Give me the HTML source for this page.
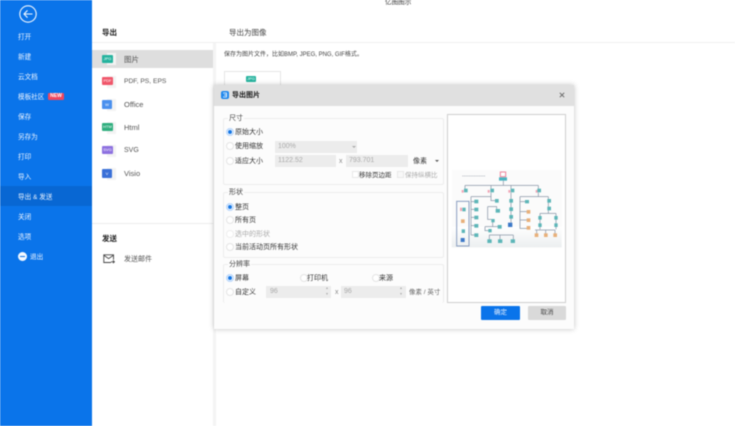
<!DOCTYPE html>
<html><head><meta charset="utf-8"><style>
html,body{margin:0;padding:0;background:#fff}
#root{position:relative;width:735px;height:426px;overflow:hidden;background:#fff;font-family:"Liberation Sans","Noto Sans CJK SC",sans-serif;font-size:7px;color:#444;filter:blur(.5px)}
#root div,#root span.a{position:absolute;white-space:nowrap}
.n{left:18px;color:#eef5ff;font-size:6.6px;line-height:10px;height:10px;transform:translateY(2px)}
.it{left:124px;font-size:7.5px;line-height:12px;color:#555;transform:translateY(1px)}
.ic{left:102px;width:11px;height:8px;border-radius:1px;color:#fff;font-size:4px;line-height:8px;text-align:center;transform:translateY(1px)}
.pg{left:107px;width:9px;height:12px;background:#f3f3f3;transform:translateY(1px)}
.lg{font-size:7px;color:#444;line-height:10px;background:#fcfcfc;padding:0 1px;transform:translateY(1px)}
.fs{left:223px;width:221px;border:1px solid #ededed;border-radius:2px;box-sizing:border-box}
.r{width:6px;height:6px;border:1px solid #e4e4e4;border-radius:50%;background:#fff;box-sizing:content-box;margin-left:-1px}
.r.on{border-color:#bcd8fb;background:#1677e6;box-shadow:inset 0 0 0 1px #fff}
.t{font-size:7px;color:#333;line-height:10px;transform:translateY(1px)}
.in{background:#ececec;height:12px;line-height:12px;color:#aaa;font-size:7px;padding-left:3px;box-sizing:border-box}
</style></head><body><div id="root">

<div style="left:0;top:0;width:92px;height:426px;background:#0a74ea"></div>
<div style="left:0;top:186px;width:92px;height:20px;background:#0867d3"></div>
<svg style="position:absolute;left:19px;top:5px" width="18" height="18" viewBox="0 0 18 18" fill="none" stroke="#f2f8ff" stroke-width="1.1"><circle cx="9" cy="9" r="8.2"/><path d="M13.5 9H5M8.5 5.4 5 9l3.5 3.6"/></svg>
<div class="n" style="top:31px">打开</div>
<div class="n" style="top:51px">新建</div>
<div class="n" style="top:71px">云文档</div>
<div class="n" style="top:91px">模板社区</div>
<div style="left:48px;top:93px;width:16px;height:7px;background:#f0465e;border-radius:1px;color:#fff;font-size:5px;line-height:7px;text-align:center;font-weight:bold">NEW</div>
<div class="n" style="top:111px">保存</div>
<div class="n" style="top:131px">另存为</div>
<div class="n" style="top:151px">打印</div>
<div class="n" style="top:171px">导入</div>
<div class="n" style="top:191px">导出 &amp; 发送</div>
<div class="n" style="top:211px">关闭</div>
<div class="n" style="top:231px">选项</div>
<div style="left:18px;top:252px;width:9px;height:9px;border-radius:50%;background:#f2f8ff"></div>
<div style="left:20px;top:256px;width:5px;height:1px;background:#0a74ea"></div>
<div class="n" style="left:30px;top:251px">退出</div>

<div style="left:385px;top:-2px;font-size:6.6px;color:#333;line-height:10px">亿图图示</div>
<div style="left:92px;top:42px;width:643px;height:1px;background:#efefef"></div>
<div style="left:213px;top:43px;width:3px;height:383px;background:#f4f4f4"></div>
<div style="left:102px;top:26px;font-size:7.5px;line-height:11px;font-weight:bold;color:#222;transform:translateY(1px)">导出</div>
<div style="left:229px;top:26px;font-size:7.5px;line-height:11px;color:#444;transform:translateY(1px)">导出为图像</div>
<div style="left:224px;top:50px;font-size:6px;line-height:10px;color:#444">保存为图片文件，比如BMP, JPEG, PNG, GIF格式。</div>
<div style="left:224px;top:71px;width:57px;height:20px;border:1px solid #e6e6e6;box-sizing:border-box;background:#fff"></div>
<div style="left:246px;top:76px;width:10px;height:6px;background:#25b39e;border-radius:1px;color:#fff;font-size:4px;line-height:6px;text-align:center">JPG</div>

<div style="left:92px;top:50px;width:121px;height:18px;background:#dedede"></div>
<div class="pg" style="top:52px"></div><div class="ic" style="top:54px;background:#25b39e">JPG</div><div class="it" style="top:53px">图片</div>
<div class="pg" style="top:75px"></div><div class="ic" style="top:76px;background:#f0566a">PDF</div><div class="it" style="top:75px;font-size:6.7px">PDF, PS, EPS</div>
<div class="pg" style="top:98px"></div><div class="ic" style="top:99px;height:9px;width:10px;background:#4a90ee;line-height:9px">W</div><div class="it" style="top:98px">Office</div>
<div class="pg" style="top:121px"></div><div class="ic" style="top:122px;background:#2fae7e">HTM</div><div class="it" style="top:121px">Html</div>
<div class="pg" style="top:144px"></div><div class="ic" style="top:145px;background:#8d70e0">SVG</div><div class="it" style="top:144px;font-size:7px">SVG</div>
<div class="pg" style="top:167px"></div><div class="ic" style="top:168px;height:9px;width:10px;background:#3a70d8;line-height:9px">V</div><div class="it" style="top:167px">Visio</div>

<div style="left:92px;top:223px;width:121px;height:1px;background:#ececec"></div>
<div style="left:102px;top:232px;font-size:7.5px;line-height:11px;font-weight:bold;color:#222;transform:translateY(1px)">发送</div>
<svg style="position:absolute;left:103px;top:254px" width="12" height="10" viewBox="0 0 12 10" fill="none" stroke="#444" stroke-width=".9"><path d="M8 8.5H.8V.8h9.7v5M.8 1.2l4.8 3.4 4.9-3.4M8 7.8h3.4M10 6.4l1.4 1.4L10 9.2"/></svg>
<div style="left:124px;top:253px;font-size:7px;line-height:11px;color:#555;transform:translateY(1px)">发送邮件</div>

<!-- Dialog -->
<div style="left:214px;top:85px;width:360px;height:244px;background:#fcfcfc;box-shadow:0 0 5px rgba(0,0,0,.25)"></div>
<div style="left:214px;top:85px;width:360px;height:21px;background:#e0e0e0"></div>
<div style="left:221px;top:91px;width:8px;height:8px;background:#1e88ee;border-radius:2px"></div>
<svg style="position:absolute;left:222px;top:92px" width="6" height="6" viewBox="0 0 6 6" fill="none" stroke="#fff" stroke-width=".8"><path d="M1 1h3.5v4H1M2 3h2.5"/></svg>
<div style="left:232px;top:91px;font-size:7px;line-height:10px;color:#222;font-weight:bold">导出图片</div>
<svg style="position:absolute;left:559px;top:92px" width="6" height="6" viewBox="0 0 6 6" stroke="#666" stroke-width=".9"><path d="M.8.8l4.4 4.4M5.2.8.8 5.2"/></svg>

<div class="fs" style="top:118px;height:67px"></div>
<div class="fs" style="top:192px;height:66px"></div>
<div class="fs" style="top:264px;height:39px;border-bottom:0"></div>
<div class="lg" style="left:228px;top:113px">尺寸</div>
<div class="lg" style="left:228px;top:187px">形状</div>
<div class="lg" style="left:228px;top:259px">分辨率</div>

<div class="r on" style="left:227px;top:128px"></div><div class="t" style="left:235px;top:127px">原始大小</div>
<div class="r" style="left:227px;top:142px"></div><div class="t" style="left:235px;top:141px">使用缩放</div>
<div class="r" style="left:227px;top:157px"></div><div class="t" style="left:235px;top:156px">适应大小</div>
<div class="in" style="left:275px;top:141px;width:82px">100%</div>
<div style="left:352px;top:146px;border:2px solid transparent;border-top:2px solid #aaa"></div>
<div class="in" style="left:275px;top:155px;width:61px">1122.52</div>
<div class="t" style="left:339px;top:156px;color:#888">x</div>
<div class="in" style="left:346px;top:155px;width:62px">793.701</div>
<div class="t" style="left:413px;top:156px">像素</div>
<div style="left:435px;top:160px;border:2px solid transparent;border-top:2px solid #555"></div>
<div style="left:352px;top:171px;width:7px;height:7px;border:1px solid #e8e8e8;box-sizing:border-box;background:#fff"></div>
<div class="t" style="left:359px;top:170px;font-size:6.5px">移除页边距</div>
<div style="left:397px;top:171px;width:7px;height:7px;border:1px solid #e8e8e8;box-sizing:border-box;background:#f8f8f8"></div>
<div class="t" style="left:405px;top:170px;color:#aaa;font-size:6.5px">保持纵横比</div>

<div class="r on" style="left:227px;top:203px"></div><div class="t" style="left:235px;top:202px">整页</div>
<div class="r" style="left:227px;top:216px"></div><div class="t" style="left:235px;top:215px">所有页</div>
<div class="r" style="left:227px;top:230px;border-color:#eee"></div><div class="t" style="left:235px;top:229px;color:#aaa">选中的形状</div>
<div class="r" style="left:227px;top:243px"></div><div class="t" style="left:235px;top:242px">当前活动页所有形状</div>

<div class="r on" style="left:227px;top:274px"></div><div class="t" style="left:235px;top:273px">屏幕</div>
<div class="r" style="left:301px;top:274px"></div><div class="t" style="left:307px;top:273px">打印机</div>
<div class="r" style="left:373px;top:274px"></div><div class="t" style="left:379px;top:273px">来源</div>
<div class="r" style="left:227px;top:288px"></div><div class="t" style="left:235px;top:287px">自定义</div>
<div class="in" style="left:266px;top:286px;width:65px;padding-left:4px">96</div>
<div class="t" style="left:335px;top:287px;color:#888">x</div>
<div class="in" style="left:341px;top:286px;width:65px;padding-left:3px">96</div>
<div style="left:326px;top:286px;border:1.5px solid transparent;border-bottom:2px solid #aaa"></div>
<div style="left:326px;top:293px;border:1.5px solid transparent;border-top:2px solid #aaa"></div>
<div style="left:400px;top:286px;border:1.5px solid transparent;border-bottom:2px solid #aaa"></div>
<div style="left:400px;top:293px;border:1.5px solid transparent;border-top:2px solid #aaa"></div>
<div class="t" style="left:409px;top:287px;color:#666;font-size:6.5px">像素 / 英寸</div>

<!-- Preview -->
<div style="left:447px;top:114px;width:119px;height:189px;border:1px solid #cfcfcf;box-sizing:border-box;background:#fff"></div>
<svg style="position:absolute;left:445px;top:160px" width="130" height="100" viewBox="0 0 390 300" fill="none">
<defs><linearGradient id="g" x1="0" y1="0" x2="0" y2="1"><stop offset="0" stop-color="#fff"/><stop offset="1" stop-color="#eceff0"/></linearGradient></defs>
<rect x="20" y="30" width="330" height="232" fill="#fbfbfb"/>
<rect x="20" y="200" width="330" height="62" fill="url(#g)"/>
<path d="M52 48h68" stroke="#b8bcc4" stroke-width="3" stroke-dasharray="3 2"/>
<g stroke="#8a97a8" stroke-width="2.2">
<path d="M175 62V76M60 76H280M60 76V88M138 76V88M198 76V88M280 76V88"/>
<path d="M78 110V225M78 110H138M78 125H93M78 148H93M78 172H93M78 197H93M78 225H93"/>
<path d="M138 98V122H155M128 140V178H143M128 140H155V152M120 200H163M120 200V212H133M133 225H205M133 225V243M165 225V243M205 225V243M143 182V200"/>
<path d="M198 98V195"/>
<path d="M280 98V110M225 110H310M225 110V205H250M225 125H245M225 155H250M225 180H250M310 110V160M285 160H333M285 160V208M333 160V208M270 210H330M275 210V225M302 210V225M330 210V225"/>
</g>
<rect x="35" y="124" width="37" height="134" stroke="#8a9ec0" stroke-width="3"/>
<rect x="166" y="36" width="16" height="14" fill="#fff" stroke="#f0829a" stroke-width="3"/>
<rect x="162" y="52" width="24" height="10" fill="#4db3c0"/>
<g fill="#f2a4b4"><rect x="50" y="90" width="6" height="8"/><rect x="128" y="90" width="6" height="8"/><rect x="190" y="90" width="6" height="8"/><rect x="272" y="90" width="6" height="8"/><rect x="45" y="143" width="6" height="10"/></g>
<g fill="#5db6b8">
<rect x="57" y="86" width="11" height="11"/><rect x="136" y="86" width="11" height="11"/><rect x="197" y="86" width="11" height="11"/><rect x="277" y="86" width="11" height="11"/>
<rect x="88" y="119" width="12" height="11"/><rect x="88" y="143" width="12" height="11"/><rect x="88" y="167" width="12" height="11"/><rect x="88" y="192" width="12" height="11"/><rect x="88" y="220" width="12" height="11"/>
<rect x="150" y="117" width="11" height="11"/><rect x="152" y="147" width="13" height="11"/><rect x="139" y="177" width="10" height="10"/><rect x="158" y="195" width="12" height="11"/><rect x="130" y="207" width="10" height="10"/>
<rect x="127" y="238" width="13" height="11"/><rect x="159" y="238" width="13" height="11"/><rect x="197" y="238" width="13" height="11"/>
<rect x="193" y="117" width="11" height="11"/><rect x="193" y="142" width="11" height="11"/><rect x="193" y="165" width="11" height="11"/>
<rect x="240" y="120" width="12" height="10"/><rect x="307" y="117" width="11" height="11"/><rect x="307" y="140" width="11" height="11"/>
<rect x="280" y="168" width="10" height="11"/><rect x="328" y="168" width="10" height="11"/><rect x="280" y="190" width="10" height="11"/><rect x="328" y="190" width="10" height="11"/>
<rect x="52" y="143" width="10" height="11"/><rect x="50" y="208" width="10" height="11"/>
</g>
<g fill="#e8b07a"><rect x="245" y="150" width="11" height="11"/><rect x="245" y="175" width="11" height="11"/><rect x="245" y="198" width="11" height="11"/><rect x="48" y="178" width="11" height="11"/><rect x="269" y="220" width="11" height="11"/><rect x="297" y="220" width="11" height="11"/><rect x="325" y="220" width="11" height="11"/></g>
<g fill="#3c78c8"><rect x="47" y="234" width="12" height="12"/><rect x="189" y="188" width="13" height="13"/></g>
</svg>

<div style="left:481px;top:306px;width:39px;height:14px;background:#0a74ea;border-radius:1px;color:#e8f2ff;font-size:6.5px;line-height:14px;text-align:center">确定</div>
<div style="left:528px;top:306px;width:38px;height:14px;background:#d9d9d9;border-radius:1px;color:#444;font-size:6.5px;line-height:14px;text-align:center">取消</div>
</div></body></html>
